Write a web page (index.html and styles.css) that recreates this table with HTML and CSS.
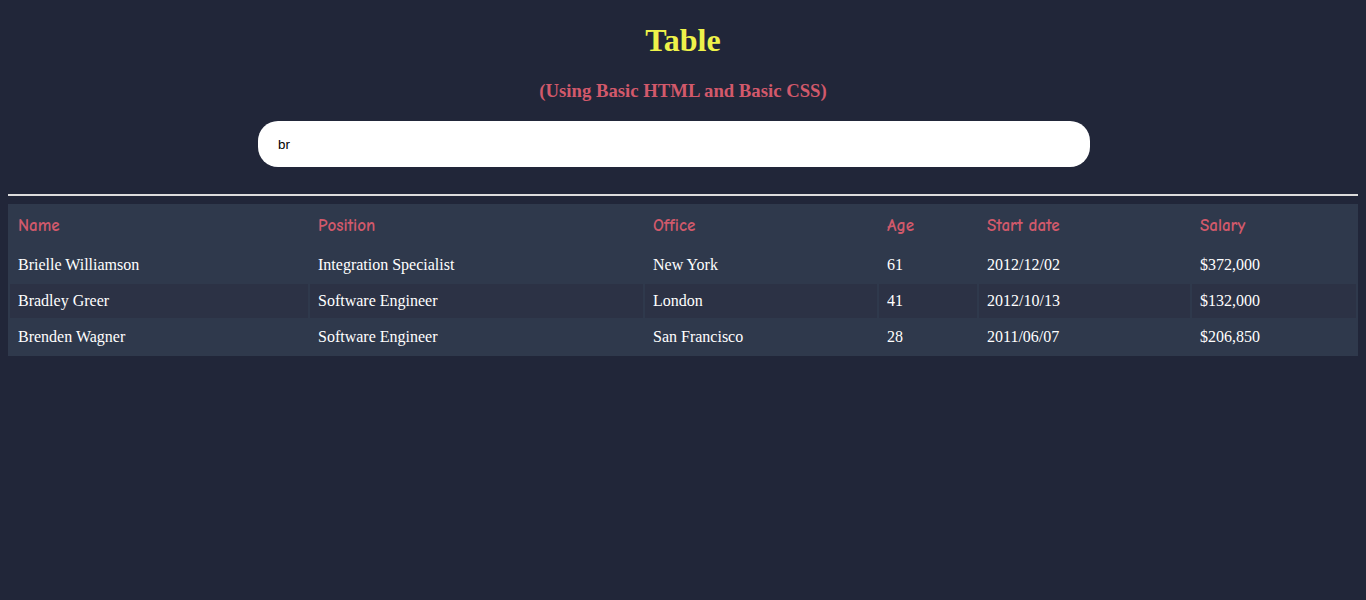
FILE: index.html
```html
<!DOCTYPE html>
<html lang="en">
<head>
<meta charset="utf-8">
<title>Table</title>
<link rel="stylesheet" href="styles.css">
</head>
<body>
<h1 class="title">Table</h1>
<h3 class="subtitle">(Using Basic HTML and Basic CSS)</h3>
<input class="search" type="text" value="br">
<hr class="divider">
<table class="data">
  <thead>
    <tr>
      <th class="c-name">Name</th>
      <th class="c-pos">Position</th>
      <th class="c-office">Office</th>
      <th class="c-age">Age</th>
      <th class="c-date">Start date</th>
      <th class="c-salary">Salary</th>
    </tr>
  </thead>
  <tbody>
    <tr>
      <td>Brielle Williamson</td>
      <td>Integration Specialist</td>
      <td>New York</td>
      <td>61</td>
      <td>2012/12/02</td>
      <td>$372,000</td>
    </tr>
    <tr>
      <td>Bradley Greer</td>
      <td>Software Engineer</td>
      <td>London</td>
      <td>41</td>
      <td>2012/10/13</td>
      <td>$132,000</td>
    </tr>
    <tr>
      <td>Brenden Wagner</td>
      <td>Software Engineer</td>
      <td>San Francisco</td>
      <td>28</td>
      <td>2011/06/07</td>
      <td>$206,850</td>
    </tr>
  </tbody>
</table>
</body>
</html>
```

FILE: styles.css
```css
html, body {
  background: #212639;
}
body {
  margin: 0;
  padding: 0 8px;
  font-family: "Liberation Serif", "Times New Roman", serif;
  color: #ffffff;
}
.title {
  font-size: 32px;
  line-height: 37px;
  margin: 0 0 21px;
  padding-top: 22px;
  text-align: center;
  color: #eef24a;
  font-weight: bold;
}
.subtitle {
  font-size: 18.72px;
  line-height: 21px;
  margin: 21px 0 20px;
  text-align: center;
  color: #d2596b;
  font-weight: bold;
}
.search {
  display: block;
  box-sizing: border-box;
  width: 832px;
  height: 46px;
  margin: 0 0 27px 250px;
  padding: 0 20px;
  border: none;
  border-radius: 20px;
  background: #ffffff;
  color: #000000;
  font-family: "Liberation Sans", Arial, sans-serif;
  font-size: 13.33px;
  outline: none;
}
.divider {
  height: 0;
  margin: 8px 0;
  border: none;
  border-top: 2px solid #dcdcdc;
}
.data {
  width: 100%;
  table-layout: fixed;
  border-collapse: separate;
  border-spacing: 2px;
  background: #2f394c;
}
.data th,
.data td {
  box-sizing: border-box;
  padding: 8px;
  text-align: left;
  vertical-align: middle;
}
.data th {
  font-family: "Comic Sans MS", "Comic Neue", "Noto Sans", sans-serif;
  font-weight: bold;
  font-size: 17px;
  line-height: 24px;
  color: #d2596b;
}
.data td {
  font-size: 16px;
  line-height: 18px;
  color: #ffffff;
}
.data tbody tr:nth-child(even) td {
  background: #2c3245;
}
.c-name { width: 298px; }
.c-pos { width: 333px; }
.c-office { width: 232px; }
.c-age { width: 98px; }
.c-date { width: 211px; }
.c-salary { width: 164px; }
```
